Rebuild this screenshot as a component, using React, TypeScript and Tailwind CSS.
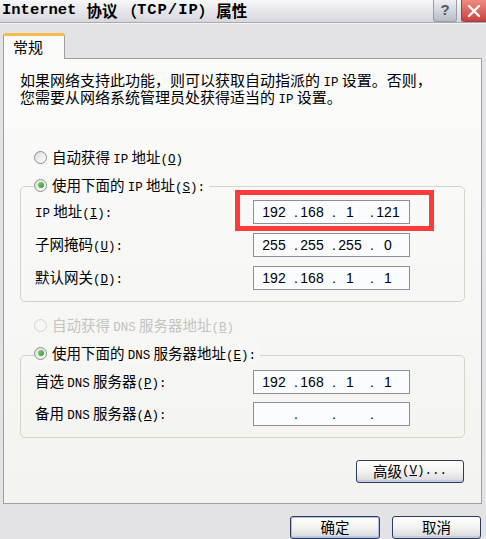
import React from "react";

const M = ({ children, className = "" }: { children: React.ReactNode; className?: string }) => (
  <span className={"font-['Liberation_Mono',monospace] text-[12.5px] leading-none " + className}>{children}</span>
);

const Radio = ({ checked = false, disabled = false }: { checked?: boolean; disabled?: boolean }) => (
  <span
    className={
      "inline-flex items-center justify-center w-[13px] h-[13px] rounded-full border shrink-0 " +
      (disabled
        ? "border-[#d4d4d0] bg-[#f6f6f4]"
        : "border-[#8a8f96] bg-gradient-to-br from-[#dcdcd8] to-white")
    }
  >
    {checked && (
      <span className="w-[6px] h-[6px] rounded-full bg-gradient-to-br from-[#7ed07e] to-[#2f9a2f]" />
    )}
  </span>
);

const IpField = ({ parts }: { parts?: string[] }) => (
  <div className="w-[157px] h-[24px] border border-[#8a9099] bg-[#fbfcfd] flex items-center pl-[8px] font-['Liberation_Sans',sans-serif] text-[14px] leading-none">
    {[0, 1, 2, 3].map((i) => (
      <React.Fragment key={i}>
        {i > 0 && <span className="w-[14px] text-right pr-[2px]">.</span>}
        <span className="w-[24px] text-center">{parts ? parts[i] : ""}</span>
      </React.Fragment>
    ))}
  </div>
);

const Row = ({ label, parts, mt = "" }: { label: React.ReactNode; parts?: string[]; mt?: string }) => (
  <div className={"flex items-center h-[24px] " + mt}>
    <div className="w-[218px] text-[14.5px] leading-none whitespace-nowrap">{label}</div>
    <IpField parts={parts} />
  </div>
);

const Btn = ({ children, className = "" }: { children: React.ReactNode; className?: string }) => (
  <div
    className={
      "flex items-center justify-center rounded-[3px] border border-[#2c3c5c] bg-gradient-to-b from-white via-[#f2f2f0] to-[#d8d8dc] shadow-[inset_0_-2px_0_#c6cbe0] text-[14.5px] leading-none " +
      className
    }
  >
    {children}
  </div>
);

export default function App() {
  return (
    <div className="w-[486px] h-[539px] overflow-hidden bg-[#e3e3e6] font-['Noto_Sans_CJK_SC',sans-serif] text-black relative">
      {/* Title bar */}
      <div className="h-[22px] flex items-stretch bg-gradient-to-b from-[#f8f8fa] to-[#d6d6dc]">
        <div className="pl-[2px] flex items-center font-bold text-[15.5px] whitespace-nowrap">
          <span className="font-['Liberation_Mono',monospace] text-[15.5px]">Internet</span>
          <span className="ml-[10px]">协议</span>
          <span className="ml-[4px]">（</span>
          <span className="font-['Liberation_Mono',monospace] text-[15.5px] tracking-[1px]">TCP/IP</span>
          <span>）</span>
          <span className="ml-[2px]">属性</span>
        </div>
        <div className="ml-auto flex gap-[4px]">
          <div className="w-[24px] h-[22px] rounded-b-[3px] border border-t-0 border-[#9a9ea8] bg-gradient-to-b from-[#eef0f4] to-[#b8bcc6] flex items-center justify-center font-['Liberation_Sans',sans-serif] font-bold text-[15px] text-[#505560]">
            ?
          </div>
          <div className="w-[25px] h-[22px] rounded-bl-[3px] border border-t-0 border-r-0 border-[#a04040] bg-gradient-to-b from-[#f08a80] to-[#c84040] flex items-center justify-center">
            <svg width="14" height="14" viewBox="0 0 14 14">
              <path d="M2 2 L12 12 M12 2 L2 12" stroke="white" strokeWidth="2.4" strokeLinecap="round" />
            </svg>
          </div>
        </div>
      </div>
      <div className="h-[1px] bg-[#a8a8ae]" />
      <div className="h-[1px] bg-[#f4f4f6]" />

      {/* Tab strip */}
      <div className="h-[34px] flex items-end pl-[3px]">
        <div className="relative z-10 w-[62px] h-[26px] -mb-[1px] bg-[#fafaf8] border border-b-0 border-[#9aa0a4] rounded-t-[3px] border-t-[3px] border-t-[#f7bd4c] flex items-center pl-[9px] text-[15px]">
          常规
        </div>
      </div>

      {/* Panel */}
      <div className="relative ml-[3px] w-[479px] h-[446px] border border-[#9aa0a4] bg-gradient-to-b from-[#fbfbfa] to-[#f3f3f0] px-[16px] pt-[12px]">
        <div className="text-[15px] leading-[17px] whitespace-nowrap">
          <div className="h-[17px]">
            如果网络支持此功能，则可以获取自动指派的 <M>IP</M> 设置。否则，
          </div>
          <div className="h-[17px]">
            您需要从网络系统管理员处获得适当的 <M>IP</M> 设置。
          </div>
        </div>

        <div className="mt-[42px] h-[20px] flex items-center pl-[14px] gap-[5px] text-[14.5px]">
          <Radio />
          <span>
            自动获得 <M>IP</M> 地址<M>(<span className="underline">O</span>)</M>
          </span>
        </div>

        {/* Group 1 */}
        <div className="relative mt-[19px] h-[116px] border border-[#d4d4c8] rounded-[5px] pl-[14px] pt-[13px]">
          <div className="absolute left-[13px] -top-[12px] h-[20px] flex items-center gap-[5px] pr-[4px] bg-[#f9f9f8] text-[14.5px]">
            <Radio checked />
            <span>
              使用下面的 <M>IP</M> 地址<M>(<span className="underline">S</span>):</M>
            </span>
          </div>
          <Row label={<><M>IP</M> 地址<M>(<span className="underline">I</span>):</M></>} parts={["192", "168", "1", "121"]} />
          <Row mt="mt-[9px]" label={<>子网掩码<M>(<span className="underline">U</span>):</M></>} parts={["255", "255", "255", "0"]} />
          <Row mt="mt-[9px]" label={<>默认网关<M>(<span className="underline">D</span>):</M></>} parts={["192", "168", "1", "1"]} />
          <div className="absolute left-[214px] top-[3px] w-[199px] h-[41px] border-[5px] border-[#ff3a3a]" />
        </div>

        <div className="mt-[13px] h-[20px] flex items-center pl-[14px] gap-[5px] text-[14.5px] text-[#c4c4c0]">
          <Radio disabled />
          <span>
            自动获得 <M>DNS</M> 服务器地址<M>(<span className="underline">B</span>)</M>
          </span>
        </div>

        {/* Group 2 */}
        <div className="relative mt-[20px] h-[83px] border border-[#d4d4c8] rounded-[5px] pl-[14px] pt-[14px]">
          <div className="absolute left-[13px] -top-[13px] h-[20px] flex items-center gap-[5px] pr-[4px] bg-[#f7f7f5] text-[14.5px]">
            <Radio checked />
            <span>
              使用下面的 <M>DNS</M> 服务器地址<M>(<span className="underline">E</span>):</M>
            </span>
          </div>
          <Row label={<>首选 <M>DNS</M> 服务器<M>(<span className="underline">P</span>):</M></>} parts={["192", "168", "1", "1"]} />
          <Row mt="mt-[8px]" label={<>备用 <M>DNS</M> 服务器<M>(<span className="underline">A</span>):</M></>} />
        </div>

        <div className="flex justify-end mt-[22px]">
          <Btn className="w-[108px] h-[23px] mr-[1px]">
            高级<M>(<span className="underline">V</span>)...</M>
          </Btn>
        </div>
      </div>

      {/* Bottom buttons */}
      <div className="flex justify-end gap-[12px] pr-[5px] mt-[12px]">
        <Btn className="w-[90px] h-[23px] shadow-[inset_0_0_0_1px_#a8c0ec,inset_0_-2px_0_#c6cbe0]">确定</Btn>
        <Btn className="w-[89px] h-[23px]">取消</Btn>
      </div>
    </div>
  );
}
